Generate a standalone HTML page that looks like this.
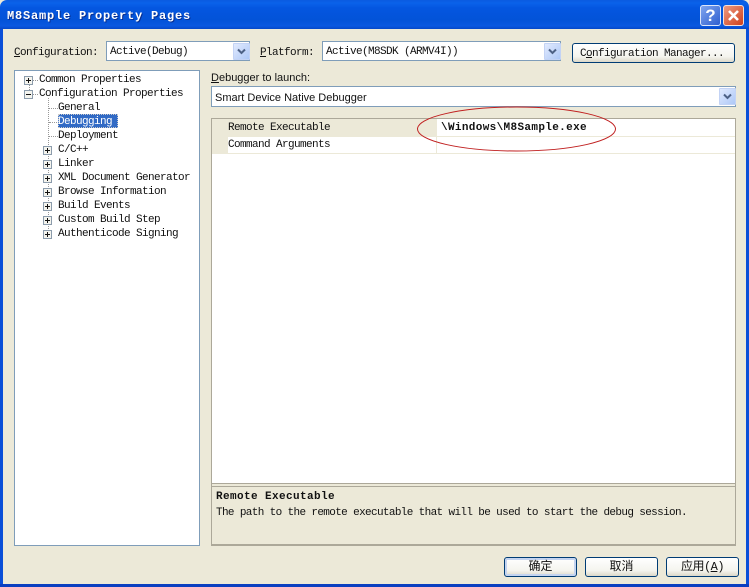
<!DOCTYPE html>
<html><head><meta charset="utf-8"><style>
html,body{margin:0;padding:0}
body{width:749px;height:587px;overflow:hidden;position:relative;background:#ece9d8}
div,span.a{position:absolute;box-sizing:border-box}
.t{font:11px/14px "Liberation Mono","Noto Sans CJK SC",monospace;letter-spacing:-.6px;color:#111;white-space:pre;margin-top:1px}
.s{font:11px/14px "Liberation Sans",sans-serif;color:#111;white-space:pre;margin-top:1px}
.box{background:#fff;border:1px solid #7f9db9}
.arr{width:17px;height:17px;background:linear-gradient(135deg,#e1eafe,#aec8f7);border:1px solid #c3d3f5;border-radius:1px}
.arr svg{position:absolute;left:3px;top:4px}
.btn{border:1px solid #003c74;border-radius:3px;background:linear-gradient(#fff 0,#f4f4ee 70%,#dcd8c8 100%);text-align:center;margin-top:0}
.pl,.mi{width:9px;height:9px;border:1px solid #8c9cac;background:#f4f4ee}
.pl:before,.mi:before{content:"";position:absolute;left:1px;top:3px;width:5px;height:1px;background:#111}
.pl:after{content:"";position:absolute;left:3px;top:1px;width:1px;height:5px;background:#111}
.dh{height:1px;border-top:1px dotted #999}
.dv{width:1px;border-left:1px dotted #999}
u{text-decoration:underline}
</style></head><body>
<!-- frame -->
<div style="left:0;top:0;width:749px;height:29px;background:linear-gradient(#0a5be0 0,#0a62ea 3px,#0456e0 8px,#0353d8 20px,#0a58e0 26px,#0548c8 29px);border-radius:7px 7px 0 0"></div>
<div style="left:0;top:29px;width:3px;height:558px;background:#0a4fd8"></div>
<div style="left:746px;top:29px;width:3px;height:558px;background:#0a4fd8"></div>
<div style="left:0;top:584px;width:749px;height:3px;background:#0a3fc0"></div>
<div class="t" style="left:7px;top:8px;margin-top:0;font-size:12px;font-weight:bold;color:#fff;letter-spacing:.8px;line-height:16px;text-shadow:1px 1px 0 #0a2f90">M8Sample Property Pages</div>
<!-- help / close -->
<div style="left:700px;top:5px;width:21px;height:21px;background:linear-gradient(135deg,#7fa4ee,#2f5fd0);border:1px solid #dde6fa;border-radius:3px;color:#fff;font:bold 17px/19px 'Liberation Sans',sans-serif;text-align:center">?</div>
<div style="left:723px;top:5px;width:21px;height:21px;background:linear-gradient(135deg,#ec9a80,#d0401c);border:1px solid #f5e0d8;border-radius:3px">
<svg width="19" height="19" style="position:absolute;left:0;top:0"><path d="M5 5L14 14M14 5L5 14" stroke="#fff" stroke-width="2.6"/></svg></div>
<!-- config row -->
<div class="t" style="left:14px;top:45px"><u>C</u>onfiguration:</div>
<div class="box" style="left:106px;top:41px;width:144px;height:20px"></div>
<div class="t" style="left:110px;top:44px">Active(Debug)</div>
<div class="arr" style="left:233px;top:43px"><svg width="9" height="8"><path d="M1 1.5L4.5 5L8 1.5" fill="none" stroke="#4d6185" stroke-width="2"/></svg></div>
<div class="t" style="left:260px;top:45px"><u>P</u>latform:</div>
<div class="box" style="left:322px;top:41px;width:239px;height:20px"></div>
<div class="t" style="left:326px;top:44px">Active(M8SDK (ARMV4I))</div>
<div class="arr" style="left:544px;top:43px"><svg width="9" height="8"><path d="M1 1.5L4.5 5L8 1.5" fill="none" stroke="#4d6185" stroke-width="2"/></svg></div>
<div class="btn t" style="left:572px;top:43px;width:163px;height:20px;line-height:20px;padding-right:3px;margin-top:0">C<u>o</u>nfiguration Manager...</div>
<!-- tree -->
<div class="box" style="left:14px;top:70px;width:186px;height:476px"></div>
<div class="dv" style="left:29px;top:84px;height:10px"></div>
<div class="dv" style="left:48px;top:98px;height:137px"></div>
<div class="pl" style="left:24px;top:76px"></div><div class="dh" style="left:33px;top:80px;width:5px"></div>
<div class="mi" style="left:24px;top:90px"></div><div class="dh" style="left:33px;top:94px;width:5px"></div>
<div class="t" style="left:39px;top:72px">Common Properties</div>
<div class="t" style="left:39px;top:86px">Configuration Properties</div>
<div class="dh" style="left:49px;top:108px;width:9px"></div>
<div class="dh" style="left:49px;top:122px;width:8px"></div>
<div class="dh" style="left:49px;top:136px;width:9px"></div>
<div class="t" style="left:58px;top:100px">General</div>
<div style="left:58px;top:114px;width:60px;height:14px;background:#316ac5;outline:1px dotted #ccc;outline-offset:-1px"></div>
<div class="t" style="left:58px;top:114px;color:#fff">Debugging</div>
<div class="t" style="left:58px;top:128px">Deployment</div>
<div class="pl" style="left:43px;top:146px"></div><div class="t" style="left:58px;top:142px">C/C++</div>
<div class="pl" style="left:43px;top:160px"></div><div class="t" style="left:58px;top:156px">Linker</div>
<div class="pl" style="left:43px;top:174px"></div><div class="t" style="left:58px;top:170px">XML Document Generator</div>
<div class="pl" style="left:43px;top:188px"></div><div class="t" style="left:58px;top:184px">Browse Information</div>
<div class="pl" style="left:43px;top:202px"></div><div class="t" style="left:58px;top:198px">Build Events</div>
<div class="pl" style="left:43px;top:216px"></div><div class="t" style="left:58px;top:212px">Custom Build Step</div>
<div class="pl" style="left:43px;top:230px"></div><div class="t" style="left:58px;top:226px">Authenticode Signing</div>
<!-- debugger -->
<div class="s" style="left:211px;top:70px"><u>D</u>ebugger to launch:</div>
<div class="box" style="left:211px;top:86px;width:525px;height:21px"></div>
<div class="s" style="left:215px;top:90px">Smart Device Native Debugger</div>
<div class="arr" style="left:719px;top:88px"><svg width="9" height="8"><path d="M1 1.5L4.5 5L8 1.5" fill="none" stroke="#4d6185" stroke-width="2"/></svg></div>
<!-- grid -->
<div style="left:211px;top:118px;width:525px;height:428px;border:1px solid #aca899;border-bottom:2px solid #aca899;background:#ece9d8"></div>
<div style="left:212px;top:119px;width:523px;height:364px;background:#fff"></div>
<div style="left:212px;top:119px;width:16px;height:35px;background:#ece9d8"></div>
<div style="left:212px;top:136px;width:523px;height:1px;background:#ece9d8"></div>
<div style="left:212px;top:153px;width:523px;height:1px;background:#ece9d8"></div>
<div style="left:436px;top:119px;width:1px;height:35px;background:#ece9d8"></div>
<div style="left:228px;top:119px;width:208px;height:17px;background:#ece9d8"></div>
<div class="t" style="left:228px;top:120px">Remote Executable</div>
<div class="t" style="left:228px;top:137px">Command Arguments</div>
<div class="t" style="left:441px;top:120px;font-weight:bold;letter-spacing:.35px">\Windows\M8Sample.exe</div>
<div style="left:212px;top:483px;width:523px;height:1px;background:#aca899"></div>
<div style="left:212px;top:486px;width:523px;height:1px;background:#aca899"></div>
<div class="t" style="left:216px;top:489px;font-weight:bold;letter-spacing:.4px">Remote Executable</div>
<div class="t" style="left:216px;top:505px;letter-spacing:-.64px">The path to the remote executable that will be used to start the debug session.</div>
<!-- ellipse -->
<svg width="749" height="587" style="position:absolute;left:0;top:0"><ellipse cx="516.5" cy="129" rx="99" ry="22" fill="none" stroke="#c02020" stroke-width="1"/></svg>
<!-- buttons -->
<div class="btn t" style="left:504px;top:557px;width:73px;height:20px;line-height:18px;font-size:12px;letter-spacing:0;box-shadow:inset 0 0 0 2px #c4d4f0">确定</div>
<div class="btn t" style="left:585px;top:557px;width:73px;height:20px;line-height:18px;font-size:12px;letter-spacing:0">取消</div>
<div class="btn t" style="left:666px;top:557px;width:73px;height:20px;line-height:18px;font-size:12px;letter-spacing:-.5px">应用(<u>A</u>)</div>
</body></html>
